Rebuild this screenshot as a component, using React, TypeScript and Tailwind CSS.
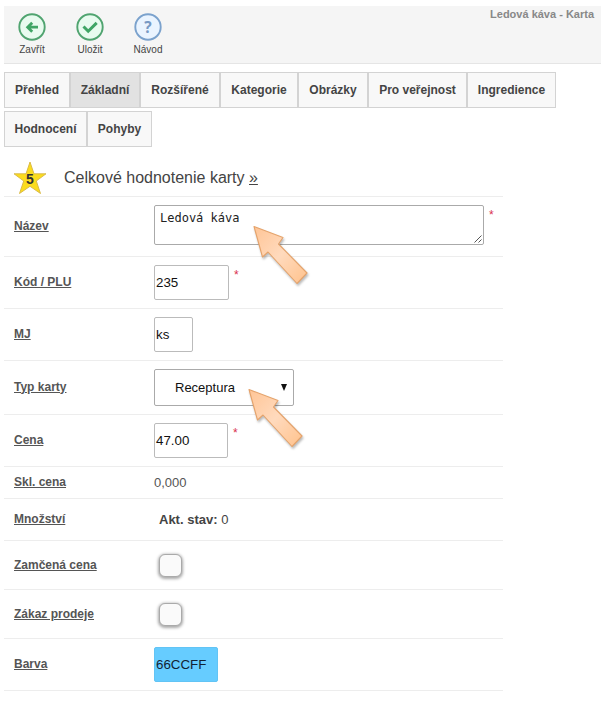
import type { ReactNode } from 'react';

function ToolButton({ label, color, fill, className, children }: { label: string; color: string; fill: string; className: string; children: ReactNode }) {
  return (
    <button className={`flex flex-col items-center text-[10px] leading-3 text-[#444] ${className}`}>
      <svg width="28" height="28" viewBox="0 0 28 28" fill="none">
        <circle cx="14" cy="14" r="12.7" fill={fill} stroke={color} strokeWidth="1.9" />
        {children}
      </svg>
      <span className="mt-[3px] whitespace-nowrap">{label}</span>
    </button>
  );
}

function Tab({ label, width, active = false }: { label: string; width: string; active?: boolean }) {
  return (
    <button className={`h-9 shrink-0 border border-[#d3d3d3] pb-px text-xs font-bold whitespace-nowrap text-[#444] ${width} ${active ? 'bg-[#e2e2e2]' : 'bg-[#f8f8f8]'}`}>
      {label}
    </button>
  );
}

function Row({ label, height, raised = false, children }: { label: string; height: string; raised?: boolean; children: ReactNode }) {
  return (
    <div className={`flex items-center border-b border-[#ededed] pl-[10px] ${height}`}>
      <div className={`w-[140px] shrink-0 text-xs font-bold text-[#555] ${raised ? 'pb-[2px]' : ''}`}>
        <span className="underline">{label}</span>
      </div>
      {children}
    </div>
  );
}

function Field({ value, className }: { value: string; className: string }) {
  return (
    <div className={`flex h-[35px] items-center rounded-[2px] border border-[#bbb] pl-px text-[13.33px] text-[#111] ${className}`}>
      {value}
    </div>
  );
}

function Required({ className }: { className: string }) {
  return <span className={`self-start text-xs leading-3 text-[#d9304f] ${className}`}>*</span>;
}

function Check() {
  return <div className="ml-[5px] size-[23px] rounded-[6px] border border-[#aaa] bg-[#fafafa] shadow-[0_1px_3px_1px_#aaa]" />;
}

function Pointer({ className, id }: { className: string; id: string }) {
  return (
    <svg className={`absolute ${className}`} width="66" height="70" viewBox="0 0 66 70">
      <defs>
        <linearGradient id={id} x1="0" y1="0" x2="1" y2="1">
          <stop offset="0" stopColor="#ffc596" />
          <stop offset=".5" stopColor="#ffdabd" />
          <stop offset="1" stopColor="#ffc28c" />
        </linearGradient>
      </defs>
      <path
        className="drop-shadow-[1px_2px_1px_#0004]"
        d="M4 4.5 33 15.5 28.5 22 57 51 47 61.5 18 30 12.5 35Z"
        fill={`url(#${id})`}
        stroke="#e5a36b"
        strokeWidth="1.1"
        strokeLinejoin="round"
      />
    </svg>
  );
}

export default function App() {
  return (
    <div className="relative h-[709px] w-[605px] overflow-hidden bg-white font-['Liberation_Sans',Arial,sans-serif]">
      <div className="pt-[6px] pl-1">
        <header className="flex h-[58px] w-[597px] items-start border-b border-[#e5e5e5] bg-[#f5f5f5] pt-[7px]">
          <ToolButton label="Zavřít" color="#50a470" fill="#e8fbef" className="ml-[14px] w-7">
            <path d="M20 14.2H10M14.2 9.7 9.7 14.2l4.5 4.5" stroke="#3fa565" strokeWidth="2.8" />
          </ToolButton>
          <ToolButton label="Uložit" color="#50a470" fill="#e8fbef" className="ml-[30px] w-7">
            <path d="m7.5 13.5 4.7 4.7 8.5-8.3" stroke="#3fa565" strokeWidth="3" />
          </ToolButton>
          <ToolButton label="Návod" color="#7ba2cd" fill="#eaf4ff" className="ml-[30px] w-7">
            <text x="14" y="19.5" textAnchor="middle" fontSize="15.5" fontWeight="bold" fill="#7899c4" className="font-['Open_Sans',sans-serif]">?</text>
          </ToolButton>
          <h1 className="mt-[-5px] mr-[7px] ml-auto text-[11px] leading-3 font-bold text-[#888]">Ledová káva - Karta</h1>
        </header>

        <nav className="mt-2 flex w-[597px] flex-wrap gap-y-[3px]">
          <Tab label="Přehled" width="w-[66px]" />
          <Tab label="Základní" width="w-[70px]" active />
          <Tab label="Rozšířené" width="w-[80px]" />
          <Tab label="Kategorie" width="w-[78px]" />
          <Tab label="Obrázky" width="w-[70px]" />
          <Tab label="Pro veřejnost" width="w-[99px]" />
          <Tab label="Ingredience" width="w-[89px]" />
          <Tab label="Hodnocení" width="w-[83px]" />
          <Tab label="Pohyby" width="w-[65px]" />
        </nav>

        <main className="w-[499px]">
          <div className="flex h-[50px] items-end border-b border-[#ededed] pb-[1px] pl-[9px]">
            <svg width="34" height="34" viewBox="0 0 34 34">
              <path d="m17 1 4 11.8h12L23.3 20l4.2 12.5L17 25.3 6.5 32.5 10.7 20 1 12.8h12Z" fill="#fbdc1e" stroke="#d6b544" strokeWidth=".9" />
              <text x="17" y="22.5" textAnchor="middle" fontSize="14" fontWeight="bold" fill="#333">5</text>
            </svg>
            <h2 className="ml-[17px] pb-[7px] text-base leading-5 text-[#444]">
              Celkové hodnotenie karty <span className="underline">»</span>
            </h2>
          </div>

          <Row label="Název" height="h-[60px]" raised>
            <div className="relative -mt-[3px] h-10 w-[330px] rounded-[2px] border border-[#aaa] px-[5px] pt-[5px] font-['DejaVu_Sans_Mono',monospace] text-xs leading-[14px] text-[#222]">
              Ledová káva
              <svg className="absolute right-0 bottom-0" width="10" height="10" viewBox="0 0 10 10" stroke="#555" strokeWidth="1">
                <path d="M1.5 8.5l7-7M5.5 8.5l3-3" />
              </svg>
            </div>
            <Required className="mt-[12px] ml-[5px]" />
          </Row>
          <Row label="Kód / PLU" height="h-[52px]" raised>
            <Field value="235" className="w-[75px]" />
            <Required className="mt-[12px] ml-[5px]" />
          </Row>
          <Row label="MJ" height="h-[52px]" raised>
            <Field value="ks" className="w-[39px]" />
          </Row>
          <Row label="Typ karty" height="h-[54px]" raised>
            <div className="flex h-[37px] w-[140px] items-center justify-between rounded-[2px] border border-[#aaa] pr-[6px] pl-5 text-[13px] text-[#111]">
              Receptura
              <svg width="6" height="7" viewBox="0 0 6 7" fill="#111">
                <path d="M0 0h6L3 7Z" />
              </svg>
            </div>
          </Row>
          <Row label="Cena" height="h-[52px]" raised>
            <Field value="47.00" className="w-[74px]" />
            <Required className="mt-[12px] ml-[5px]" />
          </Row>
          <Row label="Skl. cena" height="h-[32px]" raised>
            <span className="text-[13px] text-[#555]">0,000</span>
          </Row>
          <Row label="Množství" height="h-[42px]" raised>
            <span className="ml-[5px] text-[13px] text-[#444]"><b>Akt. stav:</b> 0</span>
          </Row>
          <Row label="Zamčená cena" height="h-[49px]"><Check /></Row>
          <Row label="Zákaz prodeje" height="h-[49px]"><Check /></Row>
          <Row label="Barva" height="h-[52px]" raised>
            <div className="flex h-[35px] w-16 items-center rounded-[2px] border border-[#62c4f5] bg-[#66ccff] pl-px text-[13.33px] text-[#123]">66CCFF</div>
          </Row>
        </main>
      </div>
      <Pointer id="pointer-name" className="top-[222px] left-[250px]" />
      <Pointer id="pointer-type" className="top-[385px] left-[245px]" />
    </div>
  );
}
